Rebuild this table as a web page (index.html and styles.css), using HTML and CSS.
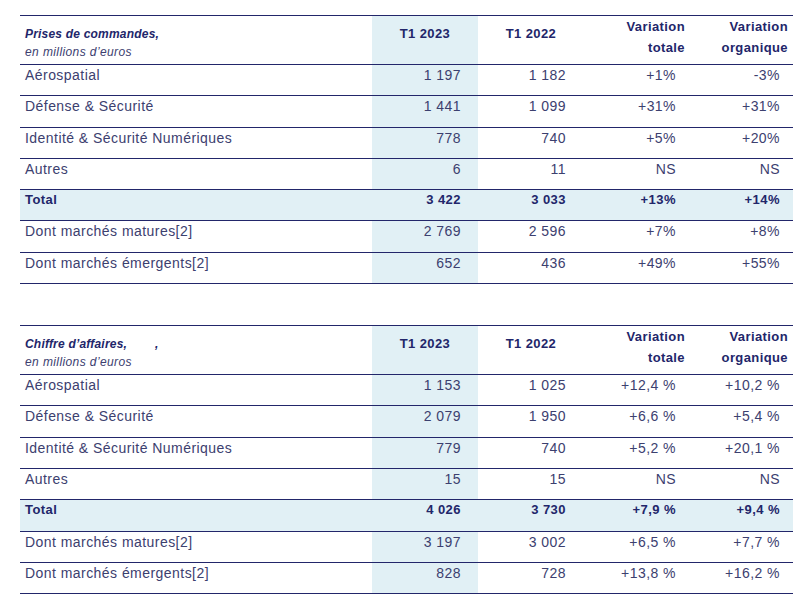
FILE: index.html
```html
<!DOCTYPE html>
<html lang="fr">
<head>
<meta charset="utf-8">
<link rel="stylesheet" href="styles.css">
</head>
<body>
<div class="page">
  <table class="fin">
    <colgroup>
      <col class="c-label"><col class="c-num"><col class="c-num"><col class="c-num"><col class="c-num2">
    </colgroup>
    <thead>
      <tr class="head">
        <th class="lbl"><span class="ttl">Prises de commandes,</span><span class="sub">en millions d’euros</span></th>
        <th class="hl ctr">T1 2023</th>
        <th class="ctr">T1 2022</th>
        <th class="rt">Variation<br>totale</th>
        <th class="rt">Variation<br>organique</th>
      </tr>
    </thead>
    <tbody>
      <tr><td class="lbl">Aérospatial</td><td class="hl">1 197</td><td>1 182</td><td>+1%</td><td>-3%</td></tr>
      <tr><td class="lbl">Défense &amp; Sécurité</td><td class="hl">1 441</td><td>1 099</td><td>+31%</td><td>+31%</td></tr>
      <tr><td class="lbl">Identité &amp; Sécurité Numériques</td><td class="hl">778</td><td>740</td><td>+5%</td><td>+20%</td></tr>
      <tr><td class="lbl">Autres</td><td class="hl">6</td><td>11</td><td>NS</td><td>NS</td></tr>
      <tr class="total"><td class="lbl">Total</td><td>3 422</td><td>3 033</td><td>+13%</td><td>+14%</td></tr>
      <tr><td class="lbl">Dont marchés matures[2]</td><td class="hl">2 769</td><td>2 596</td><td>+7%</td><td>+8%</td></tr>
      <tr><td class="lbl">Dont marchés émergents[2]</td><td class="hl">652</td><td>436</td><td>+49%</td><td>+55%</td></tr>
    </tbody>
  </table>

  <table class="fin">
    <colgroup>
      <col class="c-label"><col class="c-num"><col class="c-num"><col class="c-num"><col class="c-num2">
    </colgroup>
    <thead>
      <tr class="head">
        <th class="lbl"><span class="ttl">Chiffre d’affaires,<span class="gap"></span>,</span><span class="sub">en millions d’euros</span></th>
        <th class="hl ctr">T1 2023</th>
        <th class="ctr">T1 2022</th>
        <th class="rt">Variation<br>totale</th>
        <th class="rt">Variation<br>organique</th>
      </tr>
    </thead>
    <tbody>
      <tr><td class="lbl">Aérospatial</td><td class="hl">1 153</td><td>1 025</td><td>+12,4 %</td><td>+10,2 %</td></tr>
      <tr><td class="lbl">Défense &amp; Sécurité</td><td class="hl">2 079</td><td>1 950</td><td>+6,6 %</td><td>+5,4 %</td></tr>
      <tr><td class="lbl">Identité &amp; Sécurité Numériques</td><td class="hl">779</td><td>740</td><td>+5,2 %</td><td>+20,1 %</td></tr>
      <tr><td class="lbl">Autres</td><td class="hl">15</td><td>15</td><td>NS</td><td>NS</td></tr>
      <tr class="total"><td class="lbl">Total</td><td>4 026</td><td>3 730</td><td>+7,9 %</td><td>+9,4 %</td></tr>
      <tr><td class="lbl">Dont marchés matures[2]</td><td class="hl">3 197</td><td>3 002</td><td>+6,5 %</td><td>+7,7 %</td></tr>
      <tr><td class="lbl">Dont marchés émergents[2]</td><td class="hl">828</td><td>728</td><td>+13,8 %</td><td>+16,2 %</td></tr>
    </tbody>
  </table>
</div>
</body>
</html>
```

FILE: styles.css
```css
html, body {
  margin: 0;
  padding: 0;
  background: #ffffff;
}

body {
  font-family: "Liberation Sans", Arial, sans-serif;
  color: #3c406f;
}

.page {
  display: flex;
  flex-direction: column;
  gap: 41px;
  padding: 15px 11px 0 20px;
}

.fin {
  width: 773px;
  border-collapse: collapse;
  table-layout: fixed;
  border-top: 1px solid #22266a;
}

.c-label { width: 352px; }
.c-num { width: 106px; }
.c-num2 { width: 103px; }

.fin th,
.fin td {
  box-sizing: border-box;
  border-bottom: 1px solid #22266a;
  padding: 0;
  vertical-align: top;
  white-space: nowrap;
}

.fin .head th {
  height: 49px;
  font-size: 13px;
  font-weight: bold;
  letter-spacing: 0.4px;
  color: #22266a;
  line-height: 21px;
  padding-top: 0;
}

.fin .head th.ctr {
  text-align: center;
  padding-top: 7px;
}

.fin .head th.rt {
  text-align: right;
  padding-right: 5px;
}

.fin .head th.lbl {
  text-align: left;
  padding-left: 5px;
  padding-top: 9px;
}

.ttl {
  display: block;
  font-style: italic;
  font-weight: bold;
  font-size: 12px;
  letter-spacing: 0.2px;
  line-height: 18px;
  color: #22266a;
}

.ttl .gap {
  display: inline-block;
  width: 28px;
}

.sub {
  display: block;
  font-style: italic;
  font-weight: normal;
  font-size: 12px;
  letter-spacing: 0.4px;
  line-height: 19px;
  color: #3c406f;
}

.fin tbody td {
  height: 31.3px;
  font-size: 14px;
  letter-spacing: 0.45px;
  line-height: 18px;
  padding-top: 1px;
  text-align: right;
  padding-right: 17px;
}

.fin tbody td:nth-child(3) { padding-right: 18px; }
.fin tbody td:nth-child(4) { padding-right: 14px; }
.fin tbody td:nth-child(5) { padding-right: 13px; }

.fin tbody td.lbl {
  text-align: left;
  padding-left: 5px;
  padding-right: 0;
}

.hl {
  background: #e1f0f5;
}

.fin .total td {
  background: #e1f0f5;
  font-weight: bold;
  color: #22266a;
  font-size: 13px;
}
```
